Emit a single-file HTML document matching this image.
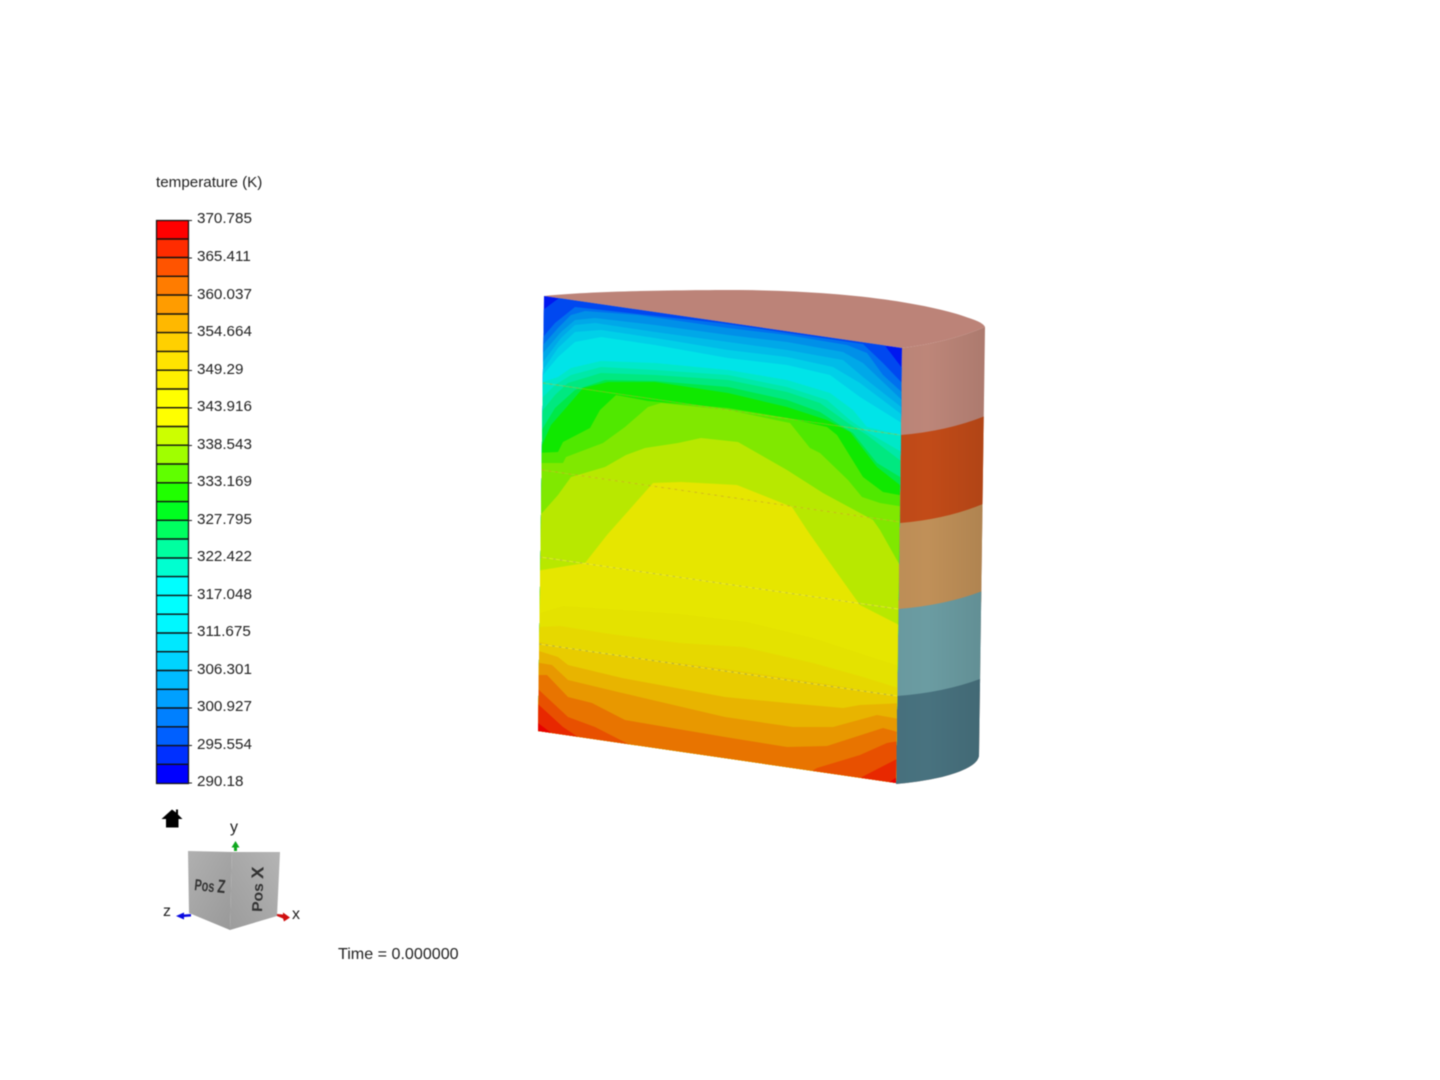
<!DOCTYPE html>
<html><head><meta charset="utf-8"><title>temperature</title>
<style>
html,body{margin:0;padding:0;background:#fff;width:1440px;height:1080px;overflow:hidden}
svg{display:block;filter:blur(.45px)}
text{font-family:"Liberation Sans",sans-serif;fill:#222}
.l{font-size:15.2px}
</style></head><body>
<svg width="1440" height="1080" viewBox="0 0 1440 1080" xmlns="http://www.w3.org/2000/svg">
<defs>
<clipPath id="face"><polygon points="544,296 902,348 896,783 538,731"/></clipPath>
<clipPath id="side"><path d="M902,348 Q950,342 985,327 L979,756 Q977,768 942,777 Q920,782 896,784 Z"/></clipPath>
<linearGradient id="sh" x1="896" x2="985" y1="0" y2="0" gradientUnits="userSpaceOnUse"><stop offset="0" stop-color="#000" stop-opacity=".02"/><stop offset=".35" stop-color="#000" stop-opacity="0"/><stop offset="1" stop-color="#000" stop-opacity=".09"/></linearGradient>
<linearGradient id="lf" x1="0" x2="1" y1="0" y2="1"><stop offset="0" stop-color="#b0b0b0"/><stop offset="1" stop-color="#999"/></linearGradient>
<linearGradient id="rf" x1="0" x2="1" y1="1" y2="0"><stop offset="0" stop-color="#9c9c9c"/><stop offset="1" stop-color="#b4b4b4"/></linearGradient>
</defs>

<!-- top cap -->
<path d="M544,296 C590,291 680,290 740,290 C830,291 905,299 957,314 C972,319 983,322 985,327 Q950,342 902,348 Z" fill="#bc8378"/>
<!-- side bands -->
<g clip-path="url(#side)">
<rect x="890" y="320" width="100" height="470" fill="#bd8679"/>
<path d="M901,435 Q950,431 990,414 V510 L900,530 Z" fill="#c24b18"/>
<path d="M900,523 Q950,519 990,501 V600 L898,620 Z" fill="#c09058"/>
<path d="M898,609 Q950,605 990,588 V690 L897,705 Z" fill="#6b9ca2"/>
<path d="M897,696 Q950,692 990,675 V790 H890 Z" fill="#48727f"/>
<rect x="890" y="320" width="100" height="470" fill="url(#sh)"/>
</g>

<!-- contour face -->
<g clip-path="url(#face)">
<rect x="530" y="290" width="380" height="500" fill="#0018f0"/>
<polygon fill="#0048f0" points="535,316 563,295 883,343 905,372 905,800 530,800"/>
<polygon fill="#0070ee" points="535,345 543,337 555,323 565,315 575,307 720,323 863,344 883,363 905,386 905,800 530,800"/>
<polygon fill="#0090e8" points="535,353 543,345 558,328 571,315 585,311 638,315 728,328 787,335 847,345 867,353 883,375 905,395 905,800 530,800"/>
<polygon fill="#00a8e8" points="535,362 543,353 561,332 575,320 595,318 655,325 728,335 787,342 843,352 863,363 905,403 905,800 530,800"/>
<polygon fill="#00bce8" points="535,371 543,362 561,338 575,325 595,323 655,332 728,342 787,350 843,360 863,377 905,410 905,800 530,800"/>
<polygon fill="#00d0e8" points="535,380 543,370 558,348 575,332 601,330 655,338 728,350 787,357 833,367 860,383 905,417 905,800 530,800"/>
<polygon fill="#00e4e8" points="535,385 543,375 558,357 575,342 601,337 655,345 728,358 787,365 830,375 860,397 905,425 905,800 530,800"/>
<polygon fill="#00e8c8" points="535,384 543,382 558,377 571,368 601,361 655,363 728,370 787,380 830,393 853,410 867,427 905,436 905,800 530,800"/>
<polygon fill="#00e8a8" points="535,405 543,397 555,385 571,375 601,367 655,370 728,375 787,387 827,400 850,420 867,432 905,454 905,800 530,800"/>
<polygon fill="#00e880" points="535,420 543,410 555,395 568,383 601,373 655,375 728,380 787,392 820,403 848,423 867,435 905,464 905,800 530,800"/>
<polygon fill="#00e848" points="535,440 543,428 555,408 575,390 605,380 655,381 728,387 787,400 820,412 843,427 853,433 877,463 905,480 905,800 530,800"/>
<polygon fill="#10e800" points="535,455 543,443 551,425 571,402 583,388 608,382 655,382 728,393 787,407 827,420 850,432 877,467 905,489 905,800 530,800"/>
<polygon fill="#50e800" points="535,453 558,452 563,442 590,428 600,410 616,395 648,401 728,408 787,418 827,427 837,435 863,477 883,492 905,496 905,800 530,800"/>
<polygon fill="#80e800" points="535,463 563,463 566,457 603,443 625,427 648,407 661,403 728,410 790,423 810,448 820,453 848,480 862,497 880,503 905,507 905,800 530,800"/>
<polygon fill="#b8e800" points="535,521 558,495 571,477 605,467 626,455 645,448 678,443 701,438 738,442 787,470 823,493 873,520 880,530 898,562 905,575 905,800 530,800"/>
<polygon fill="#e6e600" points="530,572 585,563 607,535 653,483 681,482 737,485 792,507 807,530 830,563 860,605 905,628 905,800 530,800"/>
<polygon fill="#e4e200" points="530,615 540,613 563,606 623,610 680,614 747,622 813,638 905,668 905,800 530,800"/>
<polygon fill="#e6d800" points="530,628 539,627 560,626 610,634 680,643 743,647 813,663 863,677 905,690 905,800 530,800"/>
<polygon fill="#e8cc00" points="530,640 540,642 552,645 602,653 725,669 807,681 905,697 905,800 530,800"/>
<polygon fill="#e8b400" points="530,649 539,651 558,657 568,665 622,678 725,697 787,703 843,708 860,705 905,703 905,800 530,800"/>
<polygon fill="#e89800" points="530,663 540,663 552,665 568,680 618,692 725,717 793,727 833,727 877,715 905,720 905,800 530,800"/>
<polygon fill="#e87400" points="530,675 547,675 568,697 592,703 625,720 725,737 787,747 827,746 883,728 905,734 905,800 530,800"/>
<polygon fill="#e85000" points="530,682 539,690 568,717 595,727 640,750 530,750"/>
<polygon fill="#e85000" points="805,775 817,768 860,755 887,743 905,740 905,790"/>
<polygon fill="#e82800" points="530,697 539,705 563,727 578,737 590,745 530,745"/>
<polygon fill="#e82800" points="848,785 860,778 895,760 905,755 905,790"/>
<polygon fill="#e80000" points="530,716 538,723 550,732 555,740 530,740"/>
<polygon fill="#e80000" points="885,786 888,783 897,777 905,772 905,790"/>
<g fill="none" stroke-width="1">
<g stroke="#d8dc30" opacity=".3">
<line x1="543" y1="383" x2="900" y2="435"/>
<line x1="542" y1="470" x2="900" y2="522"/>
</g>
<g stroke="#f4f040" opacity=".6">
<line x1="540" y1="557" x2="898" y2="609"/>
<line x1="539" y1="644" x2="897" y2="696"/>
</g>
<g stroke-dasharray="2.5 4.2">
<line x1="543" y1="383" x2="900" y2="435" stroke="#b89020" opacity=".4"/>
<line x1="542" y1="470" x2="900" y2="522" stroke="#c89a20" opacity=".55"/>
<line x1="540" y1="557" x2="898" y2="609" stroke="#a8a850" opacity=".6"/>
<line x1="539" y1="644" x2="897" y2="696" stroke="#9a9a50" opacity=".7"/>
</g>
</g>
</g>

<!-- legend -->
<text x="156" y="187" class="l">temperature (K)</text>
<g shape-rendering="crispEdges">
<rect x="156" y="220" width="32" height="18.8" fill="#ff0000"/>
<rect x="156" y="238.8" width="32" height="18.8" fill="#ff2c00"/>
<rect x="156" y="257.5" width="32" height="18.8" fill="#ff5400"/>
<rect x="156" y="276.3" width="32" height="18.8" fill="#ff7c00"/>
<rect x="156" y="295.1" width="32" height="18.8" fill="#ff9c00"/>
<rect x="156" y="313.9" width="32" height="18.8" fill="#ffb800"/>
<rect x="156" y="332.6" width="32" height="18.8" fill="#ffd000"/>
<rect x="156" y="351.4" width="32" height="18.8" fill="#ffe400"/>
<rect x="156" y="370.2" width="32" height="18.8" fill="#fff000"/>
<rect x="156" y="388.9" width="32" height="18.8" fill="#ffff00"/>
<rect x="156" y="407.7" width="32" height="18.8" fill="#ffff00"/>
<rect x="156" y="426.5" width="32" height="18.8" fill="#ccff00"/>
<rect x="156" y="445.2" width="32" height="18.8" fill="#a0ff00"/>
<rect x="156" y="464" width="32" height="18.8" fill="#60ff00"/>
<rect x="156" y="482.8" width="32" height="18.8" fill="#20ff00"/>
<rect x="156" y="501.6" width="32" height="18.8" fill="#00ff20"/>
<rect x="156" y="520.3" width="32" height="18.8" fill="#00ff60"/>
<rect x="156" y="539.1" width="32" height="18.8" fill="#00ffa0"/>
<rect x="156" y="557.9" width="32" height="18.8" fill="#00ffd0"/>
<rect x="156" y="576.6" width="32" height="18.8" fill="#00ffff"/>
<rect x="156" y="595.4" width="32" height="18.8" fill="#00ffff"/>
<rect x="156" y="614.2" width="32" height="18.8" fill="#00f8ff"/>
<rect x="156" y="632.9" width="32" height="18.8" fill="#00e8ff"/>
<rect x="156" y="651.7" width="32" height="18.8" fill="#00d4ff"/>
<rect x="156" y="670.5" width="32" height="18.8" fill="#00bcff"/>
<rect x="156" y="689.3" width="32" height="18.8" fill="#00a0ff"/>
<rect x="156" y="708" width="32" height="18.8" fill="#0080ff"/>
<rect x="156" y="726.8" width="32" height="18.8" fill="#0060ff"/>
<rect x="156" y="745.6" width="32" height="18.8" fill="#0030ff"/>
<rect x="156" y="764.3" width="32" height="18.8" fill="#0000ff"/>
</g>
<path fill="none" stroke="#111" stroke-width="1.2" d="M156.5,220.5H188.5V783.5H156.5Z"/>
<path fill="none" stroke="#111" stroke-width="1.4" d="M156,239H188M156,257.5H188M156,276.3H188M156,295H188M156,314H188M156,332.6H188M156,351.4H188M156,370.2H188M156,389H188M156,407.7H188M156,426.5H188M156,445.2H188M156,464H188M156,482.8H188M156,501.6H188M156,520.3H188M156,539H188M156,558H188M156,576.6H188M156,595.4H188M156,614.2H188M156,633H188M156,651.7H188M156,670.5H188M156,689.3H188M156,708H188M156,726.8H188M156,745.6H188M156,764.3H188"/>
<path fill="none" stroke="#222" stroke-width="1" d="M188,220.5h4M188,258h4M188,295.5h4M188,333h4M188,370.5h4M188,408h4M188,445.5h4M188,483h4M188,520.5h4M188,558h4M188,595.5h4M188,633h4M188,670.5h4M188,708h4M188,745.5h4M188,783h4"/>
<text class="l" x="197" y="223">370.785</text>
<text class="l" x="197" y="261">365.411</text>
<text class="l" x="197" y="299">360.037</text>
<text class="l" x="197" y="336">354.664</text>
<text class="l" x="197" y="374">349.29</text>
<text class="l" x="197" y="411">343.916</text>
<text class="l" x="197" y="449">338.543</text>
<text class="l" x="197" y="486">333.169</text>
<text class="l" x="197" y="524">327.795</text>
<text class="l" x="197" y="561">322.422</text>
<text class="l" x="197" y="599">317.048</text>
<text class="l" x="197" y="636">311.675</text>
<text class="l" x="197" y="674">306.301</text>
<text class="l" x="197" y="711">300.927</text>
<text class="l" x="197" y="749">295.554</text>
<text class="l" x="197" y="786">290.18</text>

<!-- home icon -->
<path fill="#000" d="M172,809.5 L176,812.5 V809.5 H178 V814.5 L182.5,819 H178.5 V827.5 H166 V819 H161.5 Z"/>

<!-- orientation cube -->
<polygon points="188,851 232,852 230,930 189,913" fill="url(#lf)"/>
<polygon points="232,852 280,852 277,916 230,930" fill="url(#rf)"/>
<text transform="translate(194,890) rotate(6) scale(.68,1)" font-size="16" font-weight="bold" style="fill:#333">Pos <tspan font-size="19">Z</tspan></text>
<text transform="translate(262,912) rotate(-88) scale(1.08,1)" font-size="14.5" font-weight="bold" style="fill:#333">Pos <tspan font-size="17">X</tspan></text>

<!-- axis arrows -->
<path d="M235.5,841 L239.5,847.5 H237 V851 H234 V847.5 H231.5 Z" fill="#0fa81e"/>
<path d="M176,916 L184,912.5 V914.5 L191,914 V916.5 L184,917 V919.5 Z" fill="#0a0ae0"/>
<path d="M290,917.5 L283,912.5 V914.5 L277,914 V916 L283,918.5 L284,921.5 Z" fill="#d01010"/>
<text x="230" y="832" font-size="16">y</text>
<text x="163" y="916" font-size="16">z</text>
<text x="292" y="919" font-size="16">x</text>

<text x="338" y="959" font-size="16.1">Time = 0.000000</text>
</svg>
</body></html>
